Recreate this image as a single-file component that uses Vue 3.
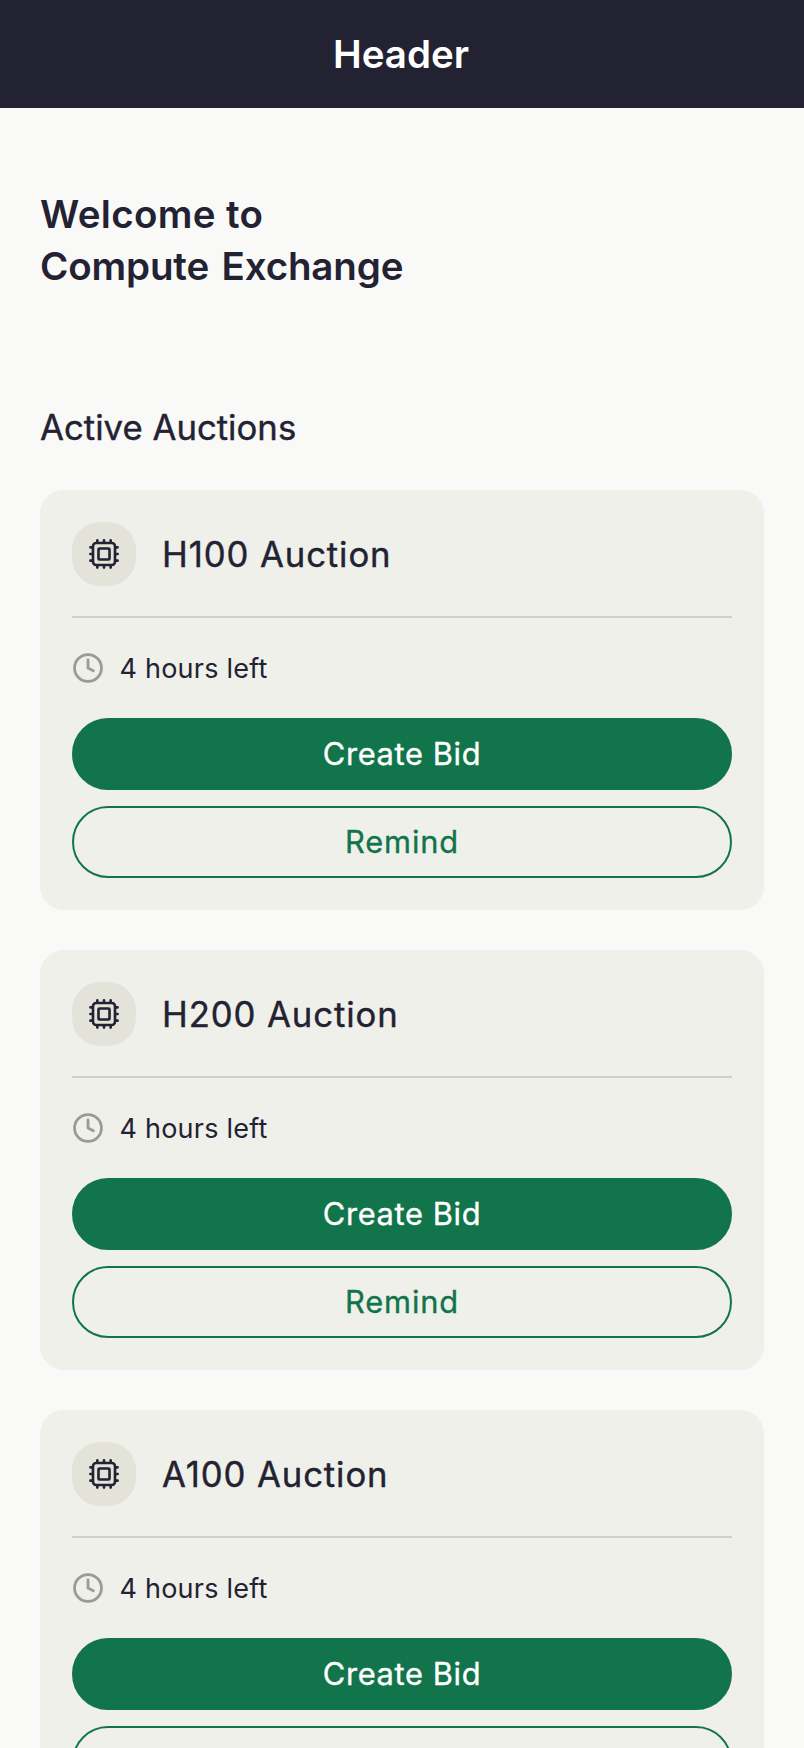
<script setup>
const auctions = [
  { name: 'H100 Auction', left: '4 hours left' },
  { name: 'H200 Auction', left: '4 hours left' },
  { name: 'A100 Auction', left: '4 hours left' },
]
const pins = [-6.67, 0, 6.67]
</script>

<template>
  <div class="page">
    <header class="header">Header</header>
    <main class="main">
      <h1 class="welcome"><span class="first">Welcome to</span><span class="second">Compute Exchange</span></h1>
      <h2 class="section">Active Auctions</h2>
      <div class="list">
        <article v-for="a in auctions" :key="a.name" class="card">
          <div class="top">
            <div class="badge">
              <svg width="32" height="32" viewBox="-16 -16 32 32" fill="none" stroke="currentColor" stroke-width="2.6">
                <rect x="-11" y="-11" width="22" height="22" rx="3.2" />
                <rect x="-5.5" y="-5.5" width="11" height="11" rx="0.8" />
                <g stroke-linecap="round">
                  <path
                    v-for="p in pins"
                    :key="p"
                    :d="`M${p} -12V-13.6M${p} 12V13.6M-12 ${p}H-13.6M12 ${p}H13.6`"
                  />
                </g>
              </svg>
            </div>
            <h3 class="name">{{ a.name }}</h3>
          </div>
          <div class="time">
            <svg class="clock" width="32" height="32" viewBox="0 0 24 24" fill="none" stroke="currentColor" stroke-width="2.1" stroke-linecap="round" stroke-linejoin="round">
              <circle cx="12" cy="12" r="10.1" />
              <path d="M12 6v6l4 2" />
            </svg>
            <span>{{ a.left }}</span>
          </div>
          <button class="btn primary">Create Bid</button>
          <button class="btn outline">Remind</button>
        </article>
      </div>
    </main>
  </div>
</template>

<style>
body {
  background: #f9f9f7;
}
</style>

<style scoped>
.page {
  height: 1748px;
  overflow: hidden;
  background: #f9f9f7;
  color: #232232;
  font-family: Inter, "Liberation Sans", sans-serif;
}
.header {
  box-sizing: border-box;
  height: 108px;
  padding-right: 2px;
  line-height: 108px;
  background: #232232;
  color: #fff;
  text-align: center;
  font-size: 38.5px;
  font-weight: 600;
}
.main {
  padding: 80px 40px 0;
}
.welcome {
  margin: 0;
  display: flex;
  flex-direction: column;
  font-size: 38.5px;
  font-weight: 600;
  line-height: 52px;
}
.first {
  letter-spacing: 0.35px;
}
.second {
  letter-spacing: -0.15px;
  word-spacing: 3px;
}
.section {
  margin: 112px 0 0;
  font-size: 34.7px;
  font-weight: 400;
  line-height: 46px;
  letter-spacing: 0.02px;
  -webkit-text-stroke: 0.4px;
}
.list {
  margin-top: 40px;
  display: flex;
  flex-direction: column;
  gap: 40px;
}
.card {
  box-sizing: border-box;
  height: 420px;
  padding: 32px;
  border-radius: 24px;
  background: #eff0ea;
}
.top {
  display: flex;
  align-items: center;
  gap: 26px;
  padding-bottom: 30px;
  border-bottom: 2px solid #d4d1c4;
}
.badge {
  display: flex;
  align-items: center;
  justify-content: center;
  width: 64px;
  height: 64px;
  border-radius: 28px;
  background: #e3e3da;
}
.name {
  margin: 0;
  font-size: 34.7px;
  font-weight: 400;
  line-height: 46px;
  letter-spacing: 0.9px;
  -webkit-text-stroke: 0.4px;
}
.time {
  display: flex;
  align-items: center;
  gap: 15.5px;
  height: 40px;
  margin: 30px 0;
  font-size: 27px;
  letter-spacing: 0.22px;
}
.clock {
  color: #9a9a98;
}
.btn {
  display: block;
  box-sizing: border-box;
  width: 100%;
  height: 72px;
  margin: 0;
  padding: 0;
  border: 2px solid #12744b;
  border-radius: 36px;
  font-family: inherit;
  font-size: 30.8px;
  line-height: 68px;
  letter-spacing: 0.65px;
  -webkit-text-stroke: 0.35px;
}
.primary {
  background: #12744b;
  color: #fff;
}
.outline {
  margin-top: 16px;
  background: transparent;
  color: #12744b;
  letter-spacing: 0.85px;
}
</style>
